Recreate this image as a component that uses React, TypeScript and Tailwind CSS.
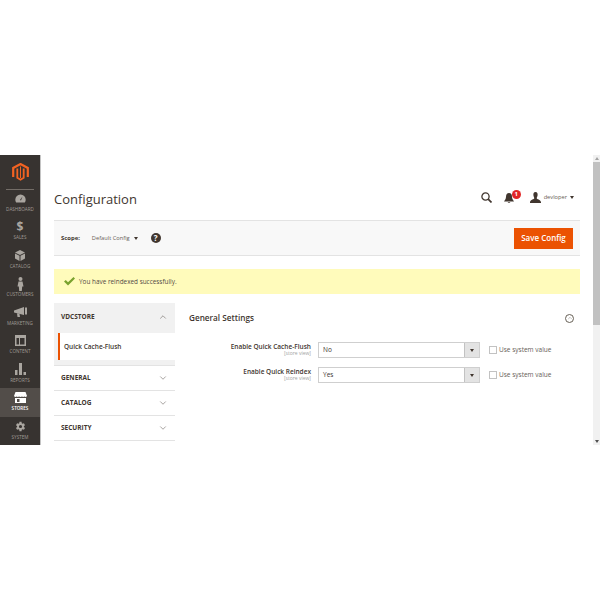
// Store configuration page
import { ChevronDown, ChevronUp } from 'lucide-react';
import type { ReactNode } from 'react';

const font = { fontFamily: '"Open Sans", sans-serif' };

function NavItem({ icon, label, active }: { icon: ReactNode; label: string; active?: boolean }) {
  return (
    <div className={`h-[28.5px] pt-[2px] flex flex-col items-center ${active ? 'bg-[#524d49]' : ''}`}>
      <div className="h-[15px] flex items-center justify-center text-[#aaa6a0]">{icon}</div>
      <span className={`text-[4.6px] leading-[7px] ${active ? 'text-white font-semibold' : 'text-[#a09c96]'}`}>{label}</span>
    </div>
  );
}

function SectionRow({ label }: { label: string }) {
  return (
    <div className="h-[25px] border-b border-[#e3e3e3] flex items-center justify-between pl-[7px] pr-[7px] shrink-0">
      <span className="text-[6.5px] font-bold text-[#41362f]">{label}</span>
      <ChevronDown size={10} strokeWidth={1.2} className="text-[#514943]" />
    </div>
  );
}

function FieldRow({ label, value }: { label: string; value: string }) {
  return (
    <div className="flex h-[25px] items-start">
      <div className="w-[122px] text-right">
        <div className="text-[6.5px] leading-[9px] font-semibold text-[#41362f]">{label}</div>
        <div className="text-[5px] leading-[5px] text-[#a3a3a3]">[store view]</div>
      </div>
      <div className="ml-[7px] w-[162px] h-[16px] border border-[#cfcfcf] bg-white flex items-center justify-between">
        <span className="pl-[4px] text-[6.5px] text-[#41362f]">{value}</span>
        <div className="w-[15px] h-full bg-[#e3e3e3] border-l border-[#c2c2c2] flex items-center justify-center">
          <div className="w-0 h-0 border-l-[2px] border-r-[2px] border-t-[3px] border-l-transparent border-r-transparent border-t-[#41362f]" />
        </div>
      </div>
      <div className="ml-[9px] flex items-center h-[16px]">
        <div className="w-[8px] h-[8px] border border-[#c2c2c2] bg-white" />
        <span className="ml-[2px] text-[6.5px] text-[#676056]">Use system value</span>
      </div>
    </div>
  );
}

export default function App() {
  return (
    <div className="h-[600px] bg-white pt-[155px] overflow-hidden" style={font}>
      <div className="h-[290px] flex overflow-hidden">
        {/* Sidebar */}
        <aside className="w-[41px] shrink-0 bg-[#373330] border-r border-[#c4c4c4] flex flex-col">
          <div className="h-[34px] pt-[8px] flex justify-center shrink-0">
            <svg width="17" height="18" viewBox="0 0 17 18" fill="none" stroke="#f26322">
              <path d="M1.200 14 V5 L8.500 1 L15.800 5 V14" strokeWidth="2.200" />
              <path d="M5.300 5.500 V14.800 L8.500 16.800 L11.700 14.800 V5.500" strokeWidth="1.800" />
              <path d="M8.500 3.500 V15" strokeWidth="1" />
            </svg>
          </div>
          <div className="mx-[6px] h-px bg-[#736d67] shrink-0" />
          <div className="-mt-[1.5px]">
            <NavItem
              label="DASHBOARD"
              icon={
                <svg width="11" height="9" viewBox="0 0 11 9">
                  <path d="M5.500 0.500 A5.200 5.200 0 0 0 0.300 5.700 Q0.300 7.400 1.200 8.500 H9.800 Q10.700 7.400 10.700 5.700 A5.200 5.200 0 0 0 5.500 0.500 Z" fill="#aaa6a0" />
                  <path d="M5 6 L7.500 2.500 L6 6.500 Z" fill="#373330" />
                </svg>
              }
            />
            <NavItem label="SALES" icon={<span className="text-[12px] font-bold leading-none">$</span>} />
            <NavItem
              label="CATALOG"
              icon={
                <svg width="10" height="11" viewBox="0 0 10 11">
                  <path d="M5 0 L10 2.500 L5 5 L0 2.500 Z M0 3.500 L4.500 5.800 V11 L0 8.600 Z M10 3.500 L5.500 5.800 V11 L10 8.600 Z" fill="#aaa6a0" />
                </svg>
              }
            />
            <NavItem
              label="CUSTOMERS"
              icon={
                <svg width="7" height="14" viewBox="0 0 7 14">
                  <circle cx="3.500" cy="2" r="2" fill="#aaa6a0" />
                  <path d="M1.500 4.500 H5.500 L6.500 9.500 H5.200 L4.800 14 H2.200 L1.800 9.500 H0.500 Z" fill="#aaa6a0" />
                </svg>
              }
            />
            <NavItem
              label="MARKETING"
              icon={
                <svg width="13" height="10" viewBox="0 0 13 10">
                  <path d="M0 3.500 L10 0 V8 L0 5.500 Z M3 6.500 L5.500 7 L6 10 H3.500 Z M11 0.500 H13 V7.500 H11 Z" fill="#aaa6a0" />
                </svg>
              }
            />
            <NavItem
              label="CONTENT"
              icon={
                <svg width="11" height="11" viewBox="0 0 11 11">
                  <path fillRule="evenodd" d="M0 0 H11 V11 H0 Z M1.500 3 V9.500 H4 V3 Z M5 3 V9.500 H9.500 V3 Z" fill="#aaa6a0" />
                </svg>
              }
            />
            <NavItem
              label="REPORTS"
              icon={
                <svg width="11" height="12" viewBox="0 0 11 12">
                  <path d="M0 7 H2.500 V12 H0 Z M4 0 H7 V12 H4 Z M8.500 9 H11 V12 H8.500 Z" fill="#aaa6a0" />
                </svg>
              }
            />
            <NavItem
              active
              label="STORES"
              icon={
                <svg width="13" height="11" viewBox="0 0 13 11">
                  <path d="M1.500 0 H11.500 L13 4 Q12 5.500 10.500 4.600 Q9 5.500 8 4.600 Q6.500 5.500 5 4.600 Q4 5.500 2.500 4.600 Q1 5.500 0 4 Z" fill="#ffffff" />
                  <path fillRule="evenodd" d="M1 6 H12 V11 H1 Z M3 7 V10 H5.500 V7 Z" fill="#ffffff" />
                </svg>
              }
            />
            <NavItem
              label="SYSTEM"
              icon={
                <svg width="11" height="11" viewBox="0 0 24 24" fill="#aaa6a0">
                  <path d="M19.400 13a7.500 7.500 0 0 0 0-2l2.500-2-2.500-4.300-3 1.200a7.500 7.500 0 0 0-1.700-1L14.300 1.700H9.700L9.300 4.900a7.500 7.500 0 0 0-1.700 1l-3-1.200L2.100 9l2.500 2a7.500 7.500 0 0 0 0 2l-2.500 2 2.500 4.300 3-1.200a7.500 7.500 0 0 0 1.700 1l.4 3.200h4.600l.4-3.200a7.500 7.500 0 0 0 1.700-1l3 1.200 2.500-4.300zM12 15.500a3.500 3.500 0 1 1 0-7 3.500 3.500 0 0 1 0 7z" />
                </svg>
              }
            />
          </div>
        </aside>

        {/* Page */}
        <main className="flex-1 min-w-0 overflow-hidden px-[13px]">
          <header className="h-[65px] flex items-center justify-between pt-[24px] pb-[4px]">
            <h1 className="mt-[5px] text-[13px] text-[#41362f]">Configuration</h1>
            <div className="flex items-center pr-[6px] text-[#41362f]">
              <svg width="11" height="11" viewBox="0 0 11 11" fill="none" stroke="#41362f">
                <circle cx="4.500" cy="4.500" r="3.600" strokeWidth="1.300" />
                <path d="M7.200 7.200 L10.500 10.500" strokeWidth="1.700" />
              </svg>
              <div className="relative ml-[12px] w-[18px] h-[12px]">
                <svg width="10" height="10" viewBox="0 0 10 10" className="absolute left-0 top-[1.500px]">
                  <path d="M5 0 Q8 0 8 4 Q8 6.500 10 8.500 H0 Q2 6.500 2 4 Q2 0 5 0 Z M3.500 9 H6.500 L5 10 Z" fill="#41362f" />
                </svg>
                <span className="absolute left-[8px] top-[-2px] w-[9px] h-[9px] rounded-full bg-[#e22626] text-white text-[6px] font-bold leading-[9px] text-center">1</span>
              </div>
              <svg width="11" height="11" viewBox="0 0 11 11" className="ml-[8px]">
                <path d="M5.500 0 C7.300 0 7.800 1.400 7.600 3.200 C7.400 4.700 6.700 5.500 6.700 6.300 C6.700 7.300 10.500 7.700 11 10 V11 H0 V10 C0.500 7.700 4.300 7.300 4.300 6.300 C4.300 5.500 3.600 4.700 3.400 3.200 C3.200 1.400 3.700 0 5.500 0 Z" fill="#41362f" />
              </svg>
              <span className="ml-[3px] text-[5.700px] text-[#676056]">devloper</span>
              <div className="ml-[3px] w-0 h-0 border-l-[2px] border-r-[2px] border-t-[3px] border-l-transparent border-r-transparent border-t-[#41362f]" />
            </div>
          </header>

          {/* Scope bar */}
          <div className="h-[36px] bg-[#f8f8f8] border-y border-[#e3e3e3] flex items-center justify-between pl-[7px] pr-[7px]">
            <div className="flex items-center">
              <span className="text-[5.900px] font-bold text-[#41362f]">Scope:</span>
              <span className="ml-[12px] text-[5.700px] text-[#676056]">Default Config</span>
              <div className="ml-[4px] w-0 h-0 border-l-[2px] border-r-[2px] border-t-[3px] border-l-transparent border-r-transparent border-t-[#41362f]" />
              <span className="ml-[13px] w-[10px] h-[10px] rounded-full bg-[#41362f] text-white text-[8px] font-bold leading-[10px] text-center">?</span>
            </div>
            <button className="w-[59px] h-[21px] bg-[#eb5202] border border-[#eb5202] text-white text-[8px] font-semibold">Save Config</button>
          </div>

          {/* Message */}
          <div className="mt-[13px] h-[25px] bg-[#fffbbb] flex items-center pl-[10px]">
            <svg width="11" height="9" viewBox="0 0 11 9">
              <path d="M0 4.500 L1.800 3 L4 5.200 L9.500 0 L11 1.500 L4 8.500 Z" fill="#79a22e" />
            </svg>
            <span className="ml-[4px] text-[6.400px] text-[#514943]">You have reindexed successfully.</span>
          </div>

          <div className="mt-[9px] flex">
            {/* Left tabs */}
            <div className="w-[121px] shrink-0 flex flex-col">
              <div className="h-[30px] pb-[3px] bg-[#f1f1f1] flex items-center justify-between pl-[7px] pr-[7px]">
                <span className="text-[6.500px] font-bold text-[#41362f]">VDCSTORE</span>
                <ChevronUp size={10} strokeWidth={1.200} className="text-[#514943]" />
              </div>
              <div className="bg-[#f1f1f1] pb-[5px] border-b border-[#e3e3e3]">
                <div className="ml-[4px] h-[27px] bg-white border-l-2 border-[#eb5202] flex items-center pl-[4px]">
                  <span className="text-[6.500px] font-semibold text-[#41362f]">Quick Cache-Flush</span>
                </div>
              </div>
              <SectionRow label="GENERAL" />
              <SectionRow label="CATALOG" />
              <SectionRow label="SECURITY" />
            </div>

            {/* Settings */}
            <div className="flex-1 min-w-0 pl-[14px]">
              <div className="h-[30px] flex items-center justify-between pr-[6px]">
                <h2 className="text-[8.200px] font-semibold text-[#41362f]">General Settings</h2>
                <div className="w-[9px] h-[9px] rounded-full border border-[#676056] flex items-center justify-center">
                  <ChevronUp size={6} strokeWidth={1.500} className="text-[#676056]" />
                </div>
              </div>
              <div className="mt-[9px]">
                <FieldRow label="Enable Quick Cache-Flush" value="No" />
                <FieldRow label="Enable Quick Reindex" value="Yes" />
              </div>
            </div>
          </div>
        </main>

        {/* Scrollbar */}
        <div className="w-[7px] shrink-0 bg-[#f1f1f1] flex flex-col items-center">
          <div className="h-[7px] flex items-center shrink-0">
            <div className="w-0 h-0 border-l-[2px] border-r-[2px] border-b-[3px] border-l-transparent border-r-transparent border-b-[#a3a3a3]" />
          </div>
          <div className="w-full h-[163px] bg-[#c1c1c1]" />
          <div className="flex-1" />
          <div className="h-[7px] flex items-center shrink-0">
            <div className="w-0 h-0 border-l-[2px] border-r-[2px] border-t-[3px] border-l-transparent border-r-transparent border-t-[#505050]" />
          </div>
        </div>
      </div>
    </div>
  );
}
